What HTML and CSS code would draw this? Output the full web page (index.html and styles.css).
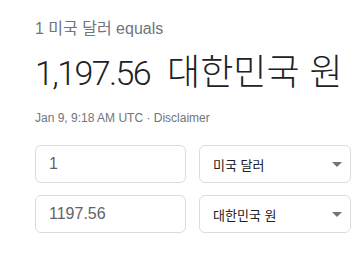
FILE: index.html
```html
<!DOCTYPE html>
<html lang="ko">
<head>
    <meta charset="UTF-8">
    <meta name="viewport" content="width=device-width, initial-scale=1.0">
    <title>환율</title>
    <link rel="stylesheet" href="styles.css">
</head>
<body>
    <div class="out_box">
        <div class="from_line">1 미국 달러 equals</div>
        <div class="big_line"><span class="big_num">1,197.56</span><span class="big_cur">대한민국 원</span></div>
        <div class="date_line">Jan 9, 9:18 AM UTC · <span class="disc">Disclaimer</span></div>
        <div class="conv_row">
            <div class="num_box">1</div>
            <div class="sel_box">
                <span>미국 달러</span>
                <div class="arrow"></div>
            </div>
        </div>
        <div class="conv_row">
            <div class="num_box">1197.56</div>
            <div class="sel_box">
                <span>대한민국 원</span>
                <div class="arrow"></div>
            </div>
        </div>
    </div>
</body>
</html>
```

FILE: styles.css
```css
body{
    margin: 0;
    background: #fff;
    font-family: "Liberation Sans", Arial, "Noto Sans CJK KR", sans-serif;
}

.out_box{
    padding: 19px 9px 0 35px;
}

.from_line{
    font-size: 16px;
    color: #70757a;
    line-height: 20px;
}

.big_line{
    margin-top: 8px;
    white-space: nowrap;
    line-height: 44px;
    color: #202124;
}

.big_num{
    font-family: Roboto, sans-serif;
    font-weight: 300;
    font-size: 34px;
    letter-spacing: -1.6px;
}

.big_cur{
    margin-left: 17px;
    font-family: "Noto Sans CJK KR", sans-serif;
    font-weight: 300;
    font-size: 36px;
}

.date_line{
    margin-top: 8px;
    font-size: 12px;
    line-height: 16px;
    color: #70757a;
}

.conv_row{
    display: flex;
    gap: 13px;
    margin-top: 19px;
}
.conv_row + .conv_row{
    margin-top: 12px;
}

.num_box, .sel_box{
    box-sizing: border-box;
    width: 151px;
    height: 38px;
    border: 1px solid #dadce0;
    border-radius: 6px;
    display: flex;
    align-items: center;
}

.num_box{
    padding-left: 13px;
    font-size: 16px;
    color: #5f6368;
}

.sel_box{
    width: 152px;
    padding: 0 8px 0 13px;
    justify-content: space-between;
    font-family: "Noto Sans CJK KR", sans-serif;
    font-size: 13px;
    color: #202124;
}

.arrow{
    width: 0;
    height: 0;
    border-left: 5px solid transparent;
    border-right: 5px solid transparent;
    border-top: 5px solid #70757a;
}
```
